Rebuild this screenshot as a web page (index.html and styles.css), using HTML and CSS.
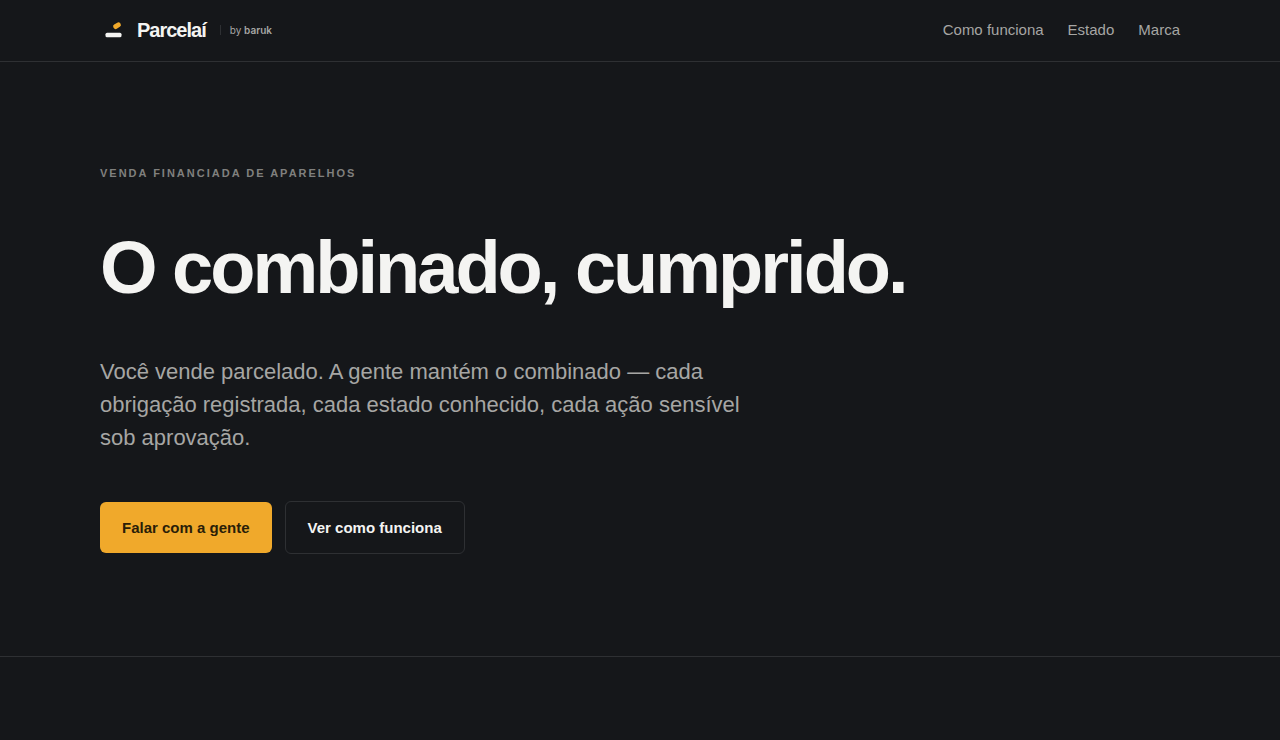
FILE: index.html
```html
<!DOCTYPE html>
<html lang="pt-BR">
<head>
    <meta charset="UTF-8">
    <meta name="viewport" content="width=device-width, initial-scale=1.0">
    <title>Parcelaí</title>
    <link rel="stylesheet" href="styles.css">
</head>
<body>
    <header class="site-header">
        <div class="container header-inner">
            <a href="#" class="brand">
                <svg class="brand-mark" viewBox="0 0 28 28" aria-hidden="true">
                    <rect x="5.5" y="16.7" width="16" height="4.6" rx="1.6" fill="#f4f4f2"/>
                    <rect x="13" y="7.2" width="8" height="5" rx="2.2" fill="#f0a92b" transform="rotate(-32 17 9.7)"/>
                </svg>
                <span class="brand-name">Parcelaí</span>
                <span class="brand-by">by <b>baruk</b></span>
            </a>
            <nav class="site-nav">
                <a href="#como-funciona">Como funciona</a>
                <a href="#estado">Estado</a>
                <a href="#marca">Marca</a>
            </nav>
        </div>
    </header>

    <main>
        <section class="hero">
            <div class="container">
                <p class="eyebrow">Venda financiada de aparelhos</p>
                <h1>O combinado, cumprido.</h1>
                <p class="lead">Você vende parcelado. A gente mantém o combinado — cada obrigação registrada, cada estado conhecido, cada ação sensível sob aprovação.</p>
                <div class="actions">
                    <a href="#contato" class="btn btn-primary">Falar com a gente</a>
                    <a href="#como-funciona" class="btn btn-outline">Ver como funciona</a>
                </div>
            </div>
        </section>
        <section id="como-funciona"></section>
    </main>
</body>
</html>
```

FILE: styles.css
```css
* {
    box-sizing: border-box;
}
body {
    margin: 0;
    background-color: #15171a;
    color: #f4f4f2;
    font-family: "Liberation Sans", Arial, sans-serif;
}
a {
    color: inherit;
    text-decoration: none;
}
.container {
    max-width: 1128px;
    margin: 0 auto;
    padding: 0 24px;
}
.site-header {
    border-bottom: 1px solid #2e3033;
}
.header-inner {
    display: flex;
    align-items: center;
    justify-content: space-between;
    padding-top: 16px;
    padding-bottom: 17px;
}
.brand {
    display: flex;
    align-items: center;
}
.brand-mark {
    width: 28px;
    height: 28px;
    margin-right: 9px;
}
.brand-name {
    font-size: 20px;
    line-height: 28px;
    font-weight: bold;
    letter-spacing: -1px;
}
.brand-by {
    margin-left: 14px;
    padding-left: 9px;
    border-left: 1px solid #2e3033;
    font-family: Inter, sans-serif;
    font-size: 10px;
    line-height: 10px;
    color: #a6a6a4;
}
.brand-by b {
    font-weight: 600;
}
.site-nav {
    display: flex;
    gap: 24px;
    font-size: 15px;
    line-height: 18px;
    color: #a6a6a4;
}
.hero {
    padding: 103px 0 102px;
    border-bottom: 1px solid #2e3033;
}
.eyebrow {
    margin: 0 0 48px;
    font-size: 11px;
    line-height: 16px;
    font-weight: bold;
    letter-spacing: 2px;
    text-transform: uppercase;
    color: #80807e;
}
h1 {
    margin: 0 0 48px;
    font-size: 74px;
    line-height: 78px;
    letter-spacing: -3px;
}
.lead {
    max-width: 660px;
    margin: 0 0 47px;
    font-size: 22px;
    line-height: 33px;
    color: #a6a6a4;
}
.actions {
    display: flex;
    flex-wrap: wrap;
    align-items: center;
    gap: 13px;
}
.btn {
    padding: 16px 22px;
    border-radius: 6px;
    font-size: 15px;
    line-height: 19px;
    font-weight: bold;
}
.btn-primary {
    background-color: #f0a92b;
    color: #2a1e08;
}
.btn-outline {
    border: 1px solid #2e3033;
}
```
